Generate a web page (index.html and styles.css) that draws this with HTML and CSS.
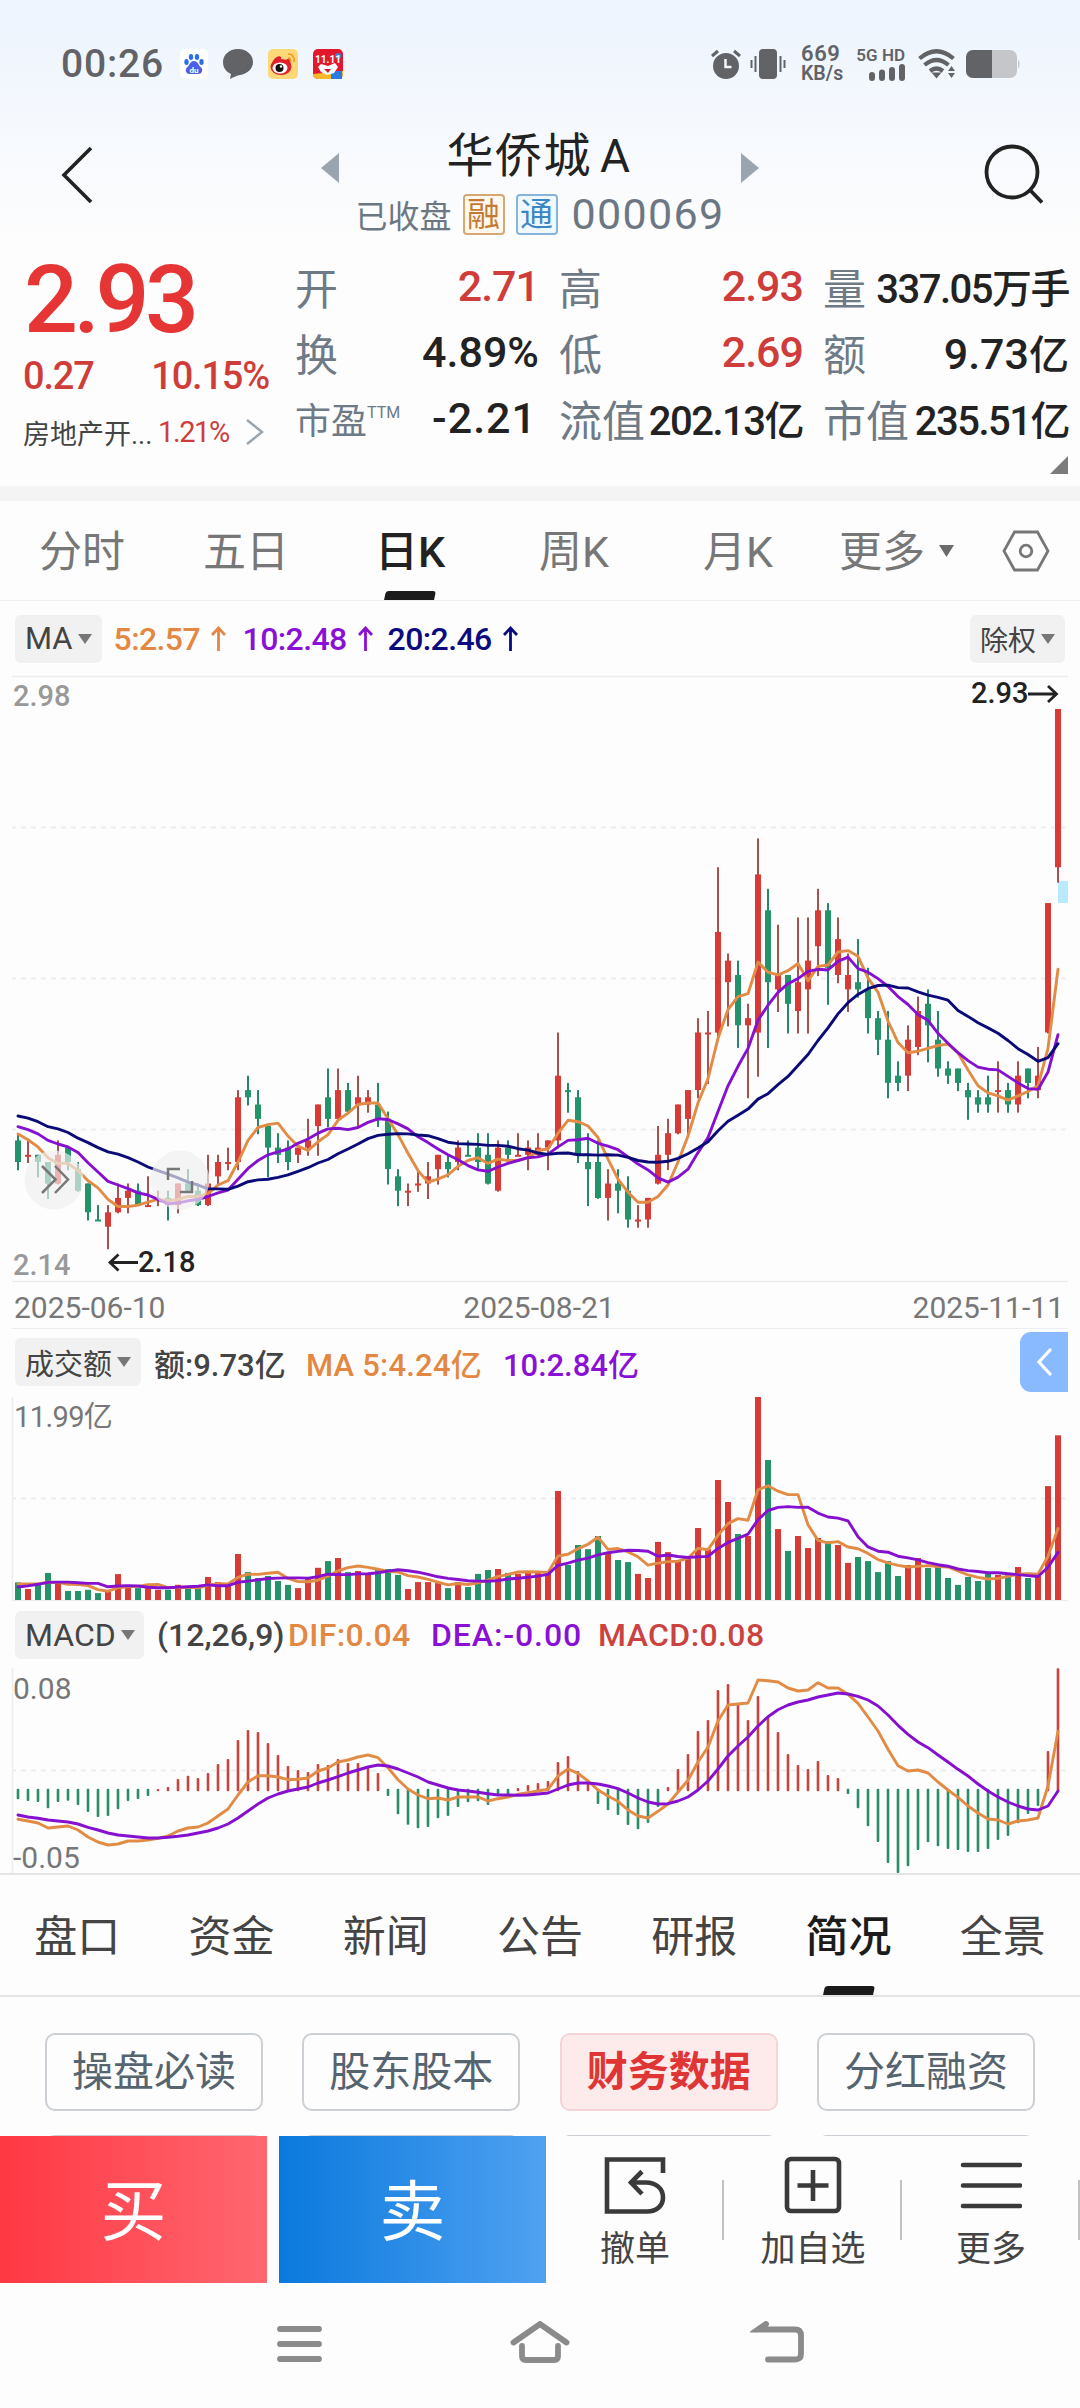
FILE: index.html
```html
<!DOCTYPE html>
<html lang="zh-CN">
<head>
  <meta charset="UTF-8" />
  <meta name="viewport" content="width=device-width, initial-scale=1.0"/>
  <title>华侨城A 000069</title>
  <link rel="stylesheet" href="styles.css">
</head>
<body>
  <div class="top">
    <div class="status-bar">
      <span class="clock">00:26</span>
      <svg class="app-icon" width="28" height="30" viewBox="0 0 28 30">
        <rect width="28" height="30" rx="5" fill="#fff"/>
        <g fill="#2b6fe8"><ellipse cx="6.500" cy="13" rx="2.200" ry="3"/><ellipse cx="11" cy="8" rx="2.200" ry="3"/><ellipse cx="17" cy="8" rx="2.200" ry="3"/><ellipse cx="21.500" cy="13" rx="2.200" ry="3"/></g>
        <path d="M14 12c4 0 4 4 7 6.500 3 3 0 7-3 6.500h-8c-3 .5-6-3.500-3-6.500 3-2.500 3-6.500 7-6.500z" fill="#4a5fe6"/>
        <text x="14" y="23.500" text-anchor="middle" class="du">du</text>
      </svg>
      <svg class="app-icon" width="30" height="30" viewBox="0 0 30 30"><path d="M15 0c9 0 15 6 15 13s-6 12-13 13c-3 .5-6 2-10 4l1-5C3 22.500 0 19 0 13 0 6 6 0 15 0z" fill="#626366"/></svg>
      <svg class="app-icon" width="30" height="30" viewBox="0 0 30 30">
        <rect width="30" height="30" rx="5" fill="#fcd976"/>
        <ellipse cx="13" cy="18" rx="10.500" ry="8" fill="#e0202b"/><path d="M4 14c2-5 7-8 9-6v4zM16 12l5-3 2 6z" fill="#e0202b"/>
        <ellipse cx="12" cy="19" rx="7.500" ry="5.500" fill="#fff"/><circle cx="11.500" cy="19" r="4" fill="#111"/><circle cx="13" cy="17.500" r="1.200" fill="#fff"/>
        <path d="M20 5c5 0 7 4 6 8M20 9c2 0 3 1.500 2.500 3.500" fill="none" stroke="#f39a1f" stroke-width="1.600"/>
      </svg>
      <svg class="app-icon" width="30" height="30" viewBox="0 0 30 30">
        <rect width="30" height="30" rx="5" fill="#e4182c"/>
        <path d="M0 25l30-3v3a5 5 0 0 1-5 5H5a5 5 0 0 1-5-5z" fill="#f6b92b"/><path d="M18 22h11v8H18z" fill="#2b7be0"/>
        <path d="M5 18l3-3 7 2 7-3 3 4-4 6-7 2-6-3z" fill="#fff"/><path d="M11 20h7l-3 4z" fill="#c4202b"/><circle cx="25" cy="7" r="3" fill="#3c82dd"/>
        <text x="15" y="14" text-anchor="middle" class="sale">11.11</text>
      </svg>
      <span class="status-gap"></span>
      <svg class="s-alarm" width="32" height="30" viewBox="0 0 32 30"><circle cx="16" cy="17" r="13" fill="#626366"/><path d="M2 7l6-5M24 2l6 5" stroke="#626366" stroke-width="3"/><path d="M15.500 10v8h6" fill="none" stroke="#f3f7fd" stroke-width="2.500"/></svg>
      <svg class="s-vib" width="36" height="30" viewBox="0 0 36 30"><rect x="9" width="18" height="30" rx="4" fill="#626366"/><path d="M1.500 11v8M5.500 7v16M30.500 7v16M34.500 11v8" stroke="#626366" stroke-width="2"/></svg>
      <span class="speed"><b>669</b><b>KB/s</b></span>
      <span class="signal">
        <b>5G HD</b>
        <svg width="36" height="17" viewBox="0 0 36 17" stroke="#626366" stroke-width="6" stroke-linecap="round"><path d="M3 11v3M13 8.500v5.500M23 6v8M33 3v11"/></svg>
      </span>
      <svg class="s-wifi" width="38" height="30" viewBox="0 0 38 30"><g fill="none" stroke="#626366" stroke-width="4.200"><path d="M1.500 9.500Q18.500-5 35.500 9.500"/><path d="M6.500 16Q18.500 6 30.500 16"/><path d="M12 22q6.500-5 13 0"/></g><path d="M13.500 23.500h10l-5 6z" fill="#626366"/><path d="M30 22l3.500-5 3.500 5zM30 24l3.500 5 3.500-5z" fill="#626366"/></svg>
      <svg width="54" height="28" viewBox="0 0 54 28"><rect width="51" height="28" rx="7" fill="#c4c6ca"/><path d="M52 9q3 5 0 10z" fill="#c4c6ca"/><path d="M7 0h19v28H7a7 7 0 0 1-7-7V7a7 7 0 0 1 7-7z" fill="#626366"/></svg>
    </div>

    <header class="header">
      <svg class="back" width="34" height="58" viewBox="0 0 34 58"><path d="M31 2L4 29l27 27" fill="none" stroke="#222" stroke-width="3.600"/></svg>
      <svg class="prev" width="18" height="30" viewBox="0 0 18 30"><path d="M18 0v30L0 15z" fill="#9aa5b0"/></svg>
      <div class="stock">
        <h1>华侨城<span>A</span></h1>
        <p><span class="state">已收盘</span><i class="tag rong">融</i><i class="tag tong">通</i><span class="code">000069</span></p>
      </div>
      <svg class="next" width="18" height="30" viewBox="0 0 18 30"><path d="M0 0v30l18-15z" fill="#9aa5b0"/></svg>
      <svg class="search" width="62" height="60" viewBox="0 0 62 60"><circle cx="28" cy="28" r="25.500" fill="none" stroke="#222" stroke-width="3.800"/><path d="M46 46l12 12.500" stroke="#222" stroke-width="3.800"/></svg>
    </header>
  </div>

  <section class="quote">
    <div class="price">
      <div class="last">2.93</div>
      <div class="change"><span>0.27</span><span>10.15%</span></div>
      <div class="sector"><span>房地产开...</span><em>1.21%</em>
        <svg width="20" height="26" viewBox="0 0 20 26"><path d="M2 1l15 12L2 25" fill="none" stroke="#9aa5b0" stroke-width="2.500"/></svg>
      </div>
    </div>
    <dl class="figures">
      <div><dt>开</dt><dd class="up">2.71</dd></div>
      <div><dt>高</dt><dd class="up">2.93</dd></div>
      <div><dt>量</dt><dd class="mixed">337.05<i>万手</i></dd></div>
      <div><dt>换</dt><dd>4.89%</dd></div>
      <div><dt>低</dt><dd class="up">2.69</dd></div>
      <div><dt>额</dt><dd>9.73<i>亿</i></dd></div>
      <div><dt class="pe">市盈<sup>TTM</sup></dt><dd class="minus">-2.21</dd></div>
      <div><dt>流值</dt><dd class="mixed">202.13<i>亿</i></dd></div>
      <div><dt>市值</dt><dd class="mixed">235.51<i>亿</i></dd></div>
    </dl>
    <svg class="corner" width="18" height="18" viewBox="0 0 18 18"><path d="M18 0v18H0z" fill="#7b7b7b"/></svg>
  </section>

  <nav class="period">
    <a>分时</a><a>五日</a><a class="on">日K</a><a>周K</a><a>月K</a>
    <a class="more">更多<svg width="15" height="12" viewBox="0 0 15 12"><path d="M0 0h15L7.500 12z" fill="#6b6b6b"/></svg></a>
    <svg class="gear" width="48" height="42" viewBox="0 0 48 42" fill="none" stroke="#777" stroke-width="2.800"><path d="M12.500 2h23L46 21 35.500 40h-23L2 21z"/><circle cx="24" cy="21" r="5.800"/></svg>
  </nav>

  <div class="ma-row">
    <span class="chip">MA<svg width="14" height="10" viewBox="0 0 14 10"><path d="M0 0h14L7 10z"/></svg></span>
    <span class="ma orange">5:2.57<svg width="15" height="25" viewBox="0 0 15 25"><path d="M7.500 25V2M1 9l6.500-7L14 9"/></svg></span>
    <span class="ma purple">10:2.48<svg width="15" height="25" viewBox="0 0 15 25"><path d="M7.500 25V2M1 9l6.500-7L14 9"/></svg></span>
    <span class="ma navy">20:2.46<svg width="15" height="25" viewBox="0 0 15 25"><path d="M7.500 25V2M1 9l6.500-7L14 9"/></svg></span>
    <span class="chip right">除权<svg width="14" height="10" viewBox="0 0 14 10"><path d="M0 0h14L7 10z"/></svg></span>
  </div>

  <svg class="chart" width="1080" height="607" viewBox="0 676 1080 607">
    <path class="rule" d="M12 676.500H1068M12 1281.500H1068"/>
    <path class="dash" d="M12 827.500H1068M12 978.500H1068M12 1129.500H1068"/>
    <rect x="1058" y="881" width="10" height="22" fill="#b9e9ff"/>
    <g id="candles"></g>
    <text class="axis bold" x="13" y="706">2.98</text>
    <text class="axis bold" x="13" y="1275">2.14</text>
    <text class="mark" x="971" y="703">2.93</text>
    <path class="arrow" d="M1028 694h28M1048 686l8.500 8-8.500 8"/>
    <text class="mark" x="138" y="1272">2.18</text>
    <path class="arrow" d="M138 1262.500h-28M118.500 1254.500l-8.500 8 8.500 8"/>
    <g class="float">
      <circle cx="54" cy="1180" r="29.500"/><circle cx="180" cy="1180" r="29.500"/>
      <path d="M42 1166l13.500 13.500L42 1193M55 1166l13 13.500-13 13.500M168 1180v-11h12M192 1181v11h-12"/>
    </g>
  </svg>

  <div class="dates"><span>2025-06-10</span><span>2025-08-21</span><span>2025-11-11</span></div>

  <div class="sub-head amount-head">
    <span class="chip">成交额<svg width="14" height="10" viewBox="0 0 14 10"><path d="M0 0h14L7 10z"/></svg></span>
    <span class="dark">额:9.73亿</span>
    <span class="orange">MA 5:4.24亿</span>
    <span class="purple">10:2.84亿</span>
    <span class="side-btn"><svg width="16" height="28" viewBox="0 0 16 28"><path d="M14 2L3 14l11 12" fill="none" stroke="#fff" stroke-width="3.200" stroke-linecap="round"/></svg></span>
  </div>

  <svg class="chart" width="1080" height="205" viewBox="0 1397 1080 205">
    <path class="rule" d="M12.500 1397V1600.500H1068"/>
    <path class="dash" d="M12 1498.500H1068"/>
    <g id="amount"></g>
    <text class="axis yi" x="14" y="1427">11.99亿</text>
  </svg>

  <div class="sub-head macd-head">
    <span class="chip">MACD<svg width="14" height="10" viewBox="0 0 14 10"><path d="M0 0h14L7 10z"/></svg></span>
    <span class="dark">(12,26,9)</span>
    <span class="orange">DIF:0.04</span>
    <span class="purple">DEA:-0.00</span>
    <span class="red">MACD:0.08</span>
  </div>

  <svg class="chart" width="1080" height="205" viewBox="0 1667 1080 205">
    <path class="rule" d="M12.500 1667V1872"/>
    <path class="dash" d="M12 1769.500H1068"/>
    <g id="macd"></g>
    <text class="axis" x="13" y="1698">0.08</text>
    <text class="axis" x="13" y="1867">-0.05</text>
  </svg>

  <nav class="info-tabs">
    <a>盘口</a><a>资金</a><a>新闻</a><a>公告</a><a>研报</a><a class="on">简况</a><a>全景</a>
  </nav>

  <div class="pills">
    <a>操盘必读</a><a>股东股本</a><a class="on">财务数据</a><a>分红融资</a>
    <a></a><a></a><a></a><a></a>
  </div>

  <footer class="actions">
    <button class="buy">买</button>
    <button class="sell">卖</button>
    <div class="act">
      <svg width="62" height="58" viewBox="0 0 62 58" fill="none" stroke="#3a3a3a" stroke-width="4.600"><path d="M59 17V3.500H3v52h40c10 0 16-6 16-14 0-9-7-15-17-15H29"/><path d="M38 15.500L27 26.500l11 11.500"/></svg>
      撤单
    </div>
    <div class="act">
      <svg width="58" height="58" viewBox="0 0 58 58" fill="none" stroke="#3a3a3a" stroke-width="4.600"><rect x="3" y="3" width="52" height="52" rx="4"/><path d="M29 14v31M13.500 29.500h31"/></svg>
      加自选
    </div>
    <div class="act">
      <svg width="62" height="58" viewBox="0 0 62 58" stroke="#3a3a3a" stroke-width="4.600" stroke-linecap="round"><path d="M3 9h57M3 29.500h57M3 50h57"/></svg>
      更多
    </div>
  </footer>

  <div class="sys-nav">
    <svg width="60" height="46" viewBox="0 0 60 46"><path d="M10 8h39M10 23h39M10 38h39"/></svg>
    <svg width="60" height="46" viewBox="0 0 60 46"><path d="M3.500 21.500L30 3l26.500 18.500M12 25v10q0 4 4 4h28q4 0 4-4V25"/></svg>
    <svg width="60" height="46" viewBox="0 0 60 46"><path d="M16 3l-8 5.500h37q6 0 6 6V33q0 5.500-6 5.500H18"/></svg>
  </div>

  <script src="script.js"></script>
</body>
</html>
```
FILE: styles.css
```css
* {
  margin: 0;
  padding: 0;
  box-sizing: border-box;
}
body {
  width: 1080px;
  height: 2408px;
  background: #fdfdfd;
  color: #222;
  font-family: Roboto, "Noto Sans CJK SC", sans-serif;
  overflow: hidden;
}
svg {
  display: block;
  flex: none;
}
i, em {
  font-style: normal;
}
.top {
  height: 240px;
  background: linear-gradient(#edf4fe, #fdfdfd);
}

/* status bar */
.status-bar {
  display: flex;
  align-items: center;
  height: 128px;
  padding: 0 60px 0 61px;
  color: #626366;
}
.clock {
  width: 119px;
  font-size: 39px;
  font-weight: 500;
  letter-spacing: 0.8px;
}
.app-icon {
  margin-right: 15px;
}
.du {
  font: bold 8px Roboto, sans-serif;
  fill: #fff;
}
.sale {
  font: bold 10px Roboto, sans-serif;
  fill: #fff;
}
.status-gap {
  flex: 1;
}
.s-alarm {
  margin-right: 8px;
}
.s-vib {
  margin-right: 15px;
}
.speed {
  display: flex;
  flex-direction: column;
  width: 56px;
  font-size: 19.500px;
  line-height: 20px;
}
.speed b, .signal b {
  font-weight: 600;
  white-space: nowrap;
}
.speed b:first-child {
  font-size: 22px;
  letter-spacing: 0.6px;
}
.signal {
  display: flex;
  flex-direction: column;
  align-items: flex-end;
  gap: 1px;
  width: 48px;
  margin-right: 13px;
  font-size: 17px;
  line-height: 16px;
}
.s-wifi {
  margin-right: 10px;
}

/* header */
.header {
  display: flex;
  align-items: flex-start;
  height: 112px;
  padding: 0 34px 0 60px;
}
.back {
  margin-top: 18px;
}
.prev {
  margin: 25px 0 0 227px;
}
.stock {
  width: 402px;
  text-align: center;
}
.stock h1 {
  height: 58px;
  margin-right: 2px;
  font-size: 47px;
  line-height: 56px;
  font-weight: 400;
  letter-spacing: 1.500px;
}
.stock h1 span {
  margin-left: 8px;
  font-size: 46px;
}
.stock p {
  display: flex;
  align-items: center;
  justify-content: center;
  height: 56px;
  color: #6c7784;
}
.state {
  font-size: 32px;
}
.tag {
  width: 42px;
  height: 41px;
  margin-left: 11px;
  border: 2px solid #d6a873;
  border-radius: 4px;
  background: #fff8ee;
  color: #c47a32;
  font-size: 33px;
  line-height: 37px;
}
.tag.tong {
  border-color: #86b4da;
  background: #eff8ff;
  color: #3d86c6;
}
.code {
  margin-left: 14px;
  font-size: 43px;
  letter-spacing: 1.300px;
}
.next {
  margin-top: 25px;
}
.search {
  margin: 16px 0 0 auto;
}

/* quote */
.quote {
  position: relative;
  display: flex;
  height: 261px;
  padding: 15px 10px 0 23px;
  border-bottom: 15px solid #f4f4f4;
}
.price {
  width: 272px;
  color: #cf3d3b;
}
.last {
  height: 88px;
  margin-left: 1px;
  font-size: 95px;
  line-height: 89px;
  font-weight: 500;
  letter-spacing: -4.500px;
  color: #e63535;
}
.change {
  display: flex;
  justify-content: space-between;
  width: 246px;
  height: 64px;
  font-size: 38px;
  line-height: 66px;
  font-weight: 500;
  letter-spacing: -1.200px;
}
.sector {
  display: flex;
  align-items: center;
  height: 50px;
  font-size: 29px;
}
.sector span {
  width: 135px;
  font-size: 27px;
  color: #444;
}
.sector em {
  width: 87px;
  letter-spacing: -1.400px;
}
.figures {
  display: grid;
  grid-template-columns: 244px 244px 246px;
  grid-auto-rows: 66px;
  column-gap: 20px;
  margin-top: -2px;
}
.figures div {
  display: flex;
  align-items: center;
  justify-content: space-between;
  white-space: nowrap;
}
dt {
  font-size: 43px;
  color: #6e7a86;
}
dt.pe {
  font-size: 36px;
}
dt sup {
  font-size: 16px;
  vertical-align: 16px;
}
dd {
  font-size: 43px;
  font-weight: 500;
  color: #222;
}
dd i {
  font-size: 40px;
}
dd.up {
  letter-spacing: -1px;
  color: #cf3d3b;
}
dd.minus {
  padding-right: 2px;
  letter-spacing: 1px;
}
dd.mixed {
  font-size: 40px;
  letter-spacing: -1.500px;
}
.corner {
  position: absolute;
  right: 12px;
  bottom: 12px;
}

/* period tabs */
.period {
  display: flex;
  align-items: center;
  height: 100px;
  border-bottom: 1px solid #eee;
  color: #777;
  font-size: 43px;
}
.period a {
  position: relative;
  width: 164px;
  padding-top: 4px;
  line-height: 95px;
  text-align: center;
}
.period .on {
  color: #222;
  font-weight: 500;
}
.period .on::after, .info-tabs .on::after {
  content: "";
  position: absolute;
  left: 50%;
  bottom: 0;
  width: 50px;
  height: 9px;
  margin-left: -25px;
  background: #1b1b1b;
  border-radius: 3px 3px 0 0;
  transform: skewX(-12deg);
}
.period .more {
  display: flex;
  align-items: center;
  width: 182px;
  padding-left: 19px;
}
.more svg {
  margin: 0 0 4px 14px;
}

/* indicator rows */
.ma-row {
  display: flex;
  align-items: center;
  height: 75px;
  padding: 0 15px;
  font-size: 32px;
  font-weight: 500;
}
.chip {
  display: flex;
  align-items: center;
  gap: 5px;
  height: 48px;
  padding: 0 10px;
  border-radius: 6px;
  background: #f1f1f1;
  color: #444;
  font-size: 31px;
  font-weight: 400;
}
.chip svg {
  fill: #777;
}
.chip.right {
  margin-left: auto;
  padding: 0 10px;
  font-size: 28px;
}
.ma {
  display: flex;
  align-items: center;
  width: 145px;
  letter-spacing: -0.6px;
}
.ma.orange {
  width: 129px;
  margin-left: 12px;
}
.ma svg {
  margin-left: 11px;
  fill: none;
  stroke: currentColor;
  stroke-width: 2.800;
}
.orange { color: #e38842; }
.purple { color: #8a10d6; }
.navy { color: #0b0b80; }
.red { color: #cb4340; }
.dark { color: #444; }

.sub-head {
  display: flex;
  align-items: center;
  padding-left: 15px;
  font-size: 31px;
  font-weight: 500;
  white-space: nowrap;
}
.amount-head {
  height: 68px;
  padding-bottom: 2px;
}
.amount-head .chip {
  width: 126px;
  font-size: 29px;
}
.amount-head .dark {
  width: 152px;
  margin-left: 13px;
}
.amount-head .orange {
  width: 197px;
  letter-spacing: 0.2px;
}
.side-btn {
  display: flex;
  align-items: center;
  justify-content: center;
  width: 48px;
  height: 60px;
  margin: 0 12px 0 auto;
  border-radius: 11px 0 0 11px;
  background: #89baff;
}
.macd-head {
  height: 66px;
  font-size: 32px;
  letter-spacing: 0.4px;
}
.macd-head .chip {
  width: 129px;
  font-size: 32px;
  letter-spacing: 0;
}
.macd-head .dark {
  width: 131px;
  margin-left: 13px;
  letter-spacing: 0;
}
.macd-head .orange {
  width: 143px;
}
.macd-head .purple {
  width: 167px;
  letter-spacing: 0.9px;
}
.dates {
  display: flex;
  justify-content: space-between;
  height: 46px;
  margin: 0 12px;
  padding: 0 4px 0 2px;
  border-bottom: 1.500px solid #ebeeee;
  color: #777;
  font-size: 30px;
  line-height: 50px;
}

/* charts */
.chart {
  overflow: visible;
}
.rule {
  fill: none;
  stroke: #eceeee;
  stroke-width: 1.500;
}
.dash {
  stroke: #eceeef;
  stroke-width: 1.800;
  stroke-dasharray: 5 5;
  stroke-dashoffset: 1;
}
.axis {
  font-size: 30px;
  fill: #777;
}
.axis.yi {
  font-size: 29px;
  letter-spacing: -0.6px;
}
.axis.bold {
  font-weight: 500;
  fill: #999;
  font-size: 29px;
}
.mark {
  font-size: 29px;
  font-weight: 500;
  fill: #222;
}
.arrow {
  fill: none;
  stroke: #222;
  stroke-width: 2.800;
}
.line {
  fill: none;
  stroke-width: 2.900;
  stroke-linejoin: round;
  stroke-linecap: round;
}
.float circle {
  fill: #efefef;
  opacity: 0.68;
}
.float path {
  fill: none;
  stroke: #777;
  stroke-width: 2.500;
}

/* bottom part */
.info-tabs {
  display: flex;
  height: 124px;
  border-top: 2px solid #e4e4e4;
  border-bottom: 2px solid #e4e4e4;
  color: #444;
  font-size: 43px;
  line-height: 124px;
  text-align: center;
}
.info-tabs a {
  position: relative;
  flex: 1;
  height: 120px;
}
.info-tabs .on {
  color: #1c1c1c;
  font-weight: 500;
}
.pills {
  display: grid;
  grid-template-columns: repeat(4, 218px);
  grid-auto-rows: 78px;
  justify-content: space-between;
  row-gap: 24px;
  height: 139px;
  padding: 36px 45px 0;
  overflow: hidden;
}
.pills a {
  border: 2.500px solid #ccd0d4;
  border-radius: 10px;
  color: #566470;
  font-size: 41px;
  line-height: 74px;
  text-align: center;
}
.pills .on {
  border-color: #f5d4d6;
  background: #fdebeb;
  color: #df3535;
  font-weight: 700;
}
.actions {
  display: flex;
  height: 147px;
}
.actions button {
  width: 267px;
  margin-right: 12px;
  padding-bottom: 8px;
  border: none;
  color: #fff;
  font: 400 66px "Noto Sans CJK SC", sans-serif;
}
.buy {
  background: linear-gradient(to right, #ff3843, #ff6770);
}
.actions .sell {
  margin-right: 0;
  background: linear-gradient(to right, #0a79de, #50a1f0);
}
.act {
  position: relative;
  display: flex;
  flex-direction: column;
  align-items: center;
  gap: 9px;
  width: 178px;
  padding-top: 20px;
  color: #444;
  font-size: 35px;
  line-height: 54px;
}
.act::after {
  content: "";
  position: absolute;
  right: 0;
  top: 44px;
  width: 2px;
  height: 60px;
  background: #c2c2c2;
}
.sys-nav {
  display: flex;
  justify-content: center;
  gap: 180px;
  height: 126px;
  padding-top: 38px;
}
.sys-nav path {
  fill: none;
  stroke: #8b8b8b;
  stroke-width: 5.800;
  stroke-linecap: round;
}
```
FILE: script.js
```js
const RED = '#d83a36', GREEN = '#24936a';
const WICK_RED = '#a9514c', WICK_GREEN = '#24866a';
const ORANGE = '#e18b45', PURPLE = '#8510d0', NAVY = '#0b0b78';

// [open, close, high, low] in cents; a leading 'r' / 'g' gives the day's colour
const days = `g233,230,234,229 r231,231,233,230 g231,230,231,228 g230,227,230,225 r227,231,233,227
g232,230,232,229 g229,226,230,226 g227,223,227,222 g222,222,224,222 r221,223,224,218
r223,225,227,223 r225,226,227,223 g226,224,227,224 r224,224,228,224 r225,225,226,224
g225,224,226,222 r224,227,227,223 g227,226,229,226 g226,224,227,224 r224,227,231,224
r228,230,231,227 r230,230,232,229 r230,239,240,229 g240,239,242,238 g238,236,240,234
g235,232,235,228 g232,231,234,230 g232,230,233,229 r231,232,232,230 r232,233,236,231
r235,238,238,231 g239,236,243,235 r236,240,243,236 g240,237,241,237 r238,239,242,235
r238,239,240,237 g238,236,241,235 g236,229,237,227 g228,226,229,224 r226,226,227,224
r227,227,229,226 r227,228,230,225 r229,231,231,227 g230,229,231,228 r230,232,233,229
g231,231,233,231 g232,230,234,229 g231,227,234,227 r226,232,233,226 g232,231,233,230
r231,231,234,231 r231,232,233,229 r231,232,234,231 r232,233,233,229 r233,242,248,232
g240,240,241,237 g239,231,240,230 g230,229,234,224 g230,225,233,225 r225,227,229,222
g227,226,229,223 g226,222,228,221 r222,222,224,221 r222,225,225,221 r227,231,235,227
r231,234,236,229 r234,238,238,234 r236,240,240,234 r240,248,250,239 r248,248,251,241
r248,262,271,247 r255,258,259,249 g256,249,258,246 r249,250,252,239 r248,270,275,242
g265,255,268,246 r254,256,263,251 g256,252,256,248 r251,255,264,248 r254,258,264,248
r260,265,268,256 g265,257,266,252 r256,261,264,255 r254,256,259,251 g255,254,261,253
g254,250,257,248 g250,247,251,245 g247,241,251,239 g242,241,244,240 r242,247,249,240
r246,251,253,245 g252,249,254,244 g247,243,251,242 g243,242,244,241 g243,241,243,240
g240,239,241,236 g239,238,240,237 g239,238,242,237 r240,240,244,237 g240,238,241,237
r238,242,244,237 g243,241,243,239 r240,242,246,239 r248,266,266,248 r271,293,293,269`
  .split(/\s+/).map(d => [d[0], ...d.slice(1).split(',').map(Number)]);

// turnover, in 亿
const amounts = [1.04,.65,.9,1.6,1,.53,.53,.6,.41,.53,1.53,.85,.7,.9,.6,.6,.9,.77,.7,1.36,1.06,.83,2.72,1.65,1.3,
  1.42,1.12,.89,.7,1.24,1.9,2.3,2.48,1.65,1.71,1.48,1.77,1.83,1.48,.65,1.06,1.06,1,.7,1.06,.77,1.54,1.77,1.83,1.6,
  1.54,1.6,1.7,1.7,6.44,2.07,3.25,3,3.78,2.83,2.36,2.24,1.54,1.3,3.43,2.83,2.36,2.42,4.25,3,7.09,5.79,3.9,3.78,
  11.99,8.27,4.19,2.9,3.78,3.07,3.66,3.48,3.25,2.19,2.54,2.3,1.65,2.3,1.42,2.07,2.48,1.89,2,1.3,.89,1.36,1.12,1.54,
  1.48,1.5,1.95,1.3,1.42,6.73,9.73];

// MACD values, one unit is a third of a pixel
const bars = [-28,-33,-36,-55,-36,-32,-45,-66,-81,-78,-58,-33,-27,-18,3,9,33,43,36,51,78,93,150,180,174,141,105,72,
  60,54,78,75,93,81,81,72,51,-18,-73,-104,-115,-111,-85,-78,-51,-37,-34,-45,-18,-13,6,15,21,27,84,102,57,27,-42,-61,
  -75,-105,-118,-99,-51,9,63,108,177,210,300,318,257,210,282,220,174,108,75,63,87,45,36,-12,-55,-109,-156,-219,-249,
  -229,-180,-157,-169,-177,-180,-186,-186,-177,-150,-138,-100,-72,-48,117,365];
const dif = [-88,-93,-99,-114,-111,-108,-120,-141,-156,-165,-162,-153,-153,-150,-145,-138,-123,-114,-111,-99,-78,-57,
  -15,24,43,43,39,31,32,36,57,66,84,90,99,105,97,67,31,3,-15,-26,-24,-30,-21,-21,-21,-33,-26,-21,-13,-8,-3,2,42,63,50,
  27,0,-18,-34,-60,-78,-84,-64,-42,-6,29,84,129,207,255,258,261,330,328,324,306,297,300,322,306,306,287,260,219,177,
  122,73,57,60,51,24,0,-22,-48,-69,-87,-90,-102,-93,-90,-84,12,176];
const dea = [-75,-81,-85,-90,-93,-96,-102,-112,-120,-129,-135,-138,-141,-144,-144,-142,-139,-135,-129,-123,-114,-102,
  -84,-63,-42,-24,-12,-3,3,9,21,30,40,51,60,69,75,72,63,51,39,24,15,6,0,-3,-7,-11,-15,-15,-16,-15,-12,-9,3,15,21,21,18,
  12,4,-9,-24,-36,-42,-41,-33,-21,0,27,63,102,132,159,192,220,241,255,264,270,279,285,291,288,281,270,252,225,194,167,
  144,127,105,84,62,42,18,-3,-21,-36,-48,-57,-60,-48,-3];

const x = i => 18 + i * 10;
const yPrice = p => 709 + (293 - p) * 7.19;
const yAmount = v => 1600 - v * 16.93;
const yMacd = v => 1789 - v / 3;

// moving average; head holds the values for the days before the window is full
function average(values, n, head) {
  return values.map((v, i) => i < n - 1 ? head[i] : values.slice(i - n + 1, i + 1).reduce((a, b) => a + b) / n);
}

function line(values, y, color) {
  const points = values.map((v, i) => x(i) + ',' + y(v).toFixed(1)).join(' ');
  return `<polyline class="line" stroke="${color}" points="${points}"/>`;
}

function rect(cx, w, top, bottom, color, r = 0) {
  return `<rect x="${cx - w / 2}" y="${top.toFixed(1)}" width="${w}" height="${(bottom - top).toFixed(1)}" rx="${r}" fill="${color}"/>`;
}

const closes = days.map(d => d[2]);
let out = '';
days.forEach(([c, open, close, high, low], i) => {
  const up = c === 'r';
  const top = yPrice(Math.max(open, close));
  const bottom = Math.max(yPrice(Math.min(open, close)), top + 2);
  out += rect(x(i), 2, yPrice(high), yPrice(low) + 1, up ? WICK_RED : WICK_GREEN);
  out += rect(x(i), 6, top, bottom, up ? RED : GREEN);
});
out += line(average(closes, 5, [233.9, 233.1, 232.1, 230.6]), yPrice, ORANGE);
out += line(average(closes, 10, [234.9, 234.5, 233.9, 233, 232.5, 232.1, 231.3, 229.9, 228.6]), yPrice, PURPLE);
out += line(average(closes, 20, [236.4, 236.1, 235.6, 234.9, 234.6, 234.1, 233.3, 232.7, 232, 231.4, 231.1, 230.6, 230,
  229.3, 228.8, 228.3, 227.8, 227.2, 226.8]), yPrice, NAVY);
document.getElementById('candles').innerHTML = out;

out = amounts.map((v, i) => rect(x(i), 6, yAmount(v), 1600, days[i][0] === 'r' ? RED : GREEN)).join('');
out += line(average(amounts, 5, [.95, .95, .95, 1.06]), yAmount, ORANGE);
out += line(average(amounts, 10, [.77, .83, .93, 1.04, 1.06, 1.06, 1.02, .98, .98]), yAmount, PURPLE);
document.getElementById('amount').innerHTML = out;

out = bars.map((v, i) => v > 0
  ? rect(x(i), 2.6, yMacd(v), 1790.3, '#c5453f', 1)
  : rect(x(i), 2.6, 1787.7, yMacd(v), '#2c8c68', 1)).join('');
out += line(dif, yMacd, ORANGE) + line(dea, yMacd, PURPLE);
document.getElementById('macd').innerHTML = out;
```
